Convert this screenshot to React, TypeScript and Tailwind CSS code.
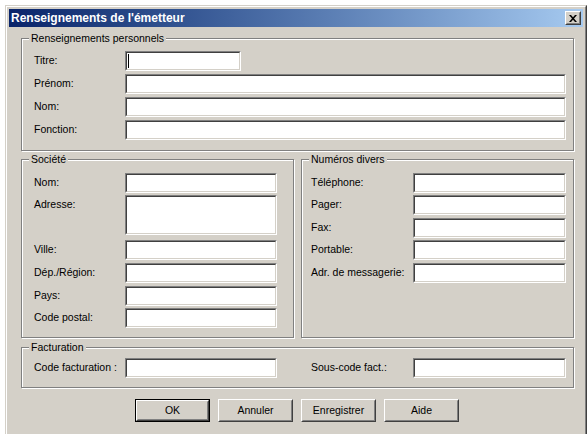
import React from "react";

function Field({ w, h = 20, cursor = false }: { w: string; h?: number; cursor?: boolean }) {
  return (
    <div
      className={`${w} shrink-0 border border-t-[#808080] border-l-[#808080] border-r-white border-b-white`}
      style={{ height: h }}
    >
      <div className="relative h-full border border-t-[#404040] border-l-[#404040] border-r-[#d4d0c8] border-b-[#d4d0c8] bg-white">
        {cursor && <div className="absolute left-[1px] top-[1px] h-[14px] w-[1px] bg-black" />}
      </div>
    </div>
  );
}

function Group({
  title,
  className,
  legendLeft = "left-[7px]",
  children,
}: {
  title: string;
  className: string;
  legendLeft?: string;
  children: React.ReactNode;
}) {
  return (
    <div
      className={`relative border border-[#808080] shadow-[inset_1px_1px_0_#ffffff,1px_1px_0_#ffffff] ${className}`}
    >
      <div className={`absolute ${legendLeft} top-[-7px] bg-[#d4d0c8] px-[2px] leading-[13px]`}>{title}</div>
      {children}
    </div>
  );
}

function Btn({ label, def = false }: { label: string; def?: boolean }) {
  const inner = (
    <div className="h-full border border-t-white border-l-white border-r-[#404040] border-b-[#404040]">
      <div className="flex h-full items-center justify-center border border-t-[#d4d0c8] border-l-[#d4d0c8] border-r-[#808080] border-b-[#808080]">
        {label}
      </div>
    </div>
  );
  return (
    <div className={`h-[23px] w-[75px] ${def ? "border border-black" : ""}`}>{inner}</div>
  );
}

export default function App() {
  return (
    <div className="h-[434px] w-[587px] overflow-hidden bg-white pl-[5px] pt-[5px] font-['Liberation_Sans',Arial,sans-serif] text-[10.5px] text-black">
      <div className="h-[440px] w-[582px] border border-t-[#d4d0c8] border-l-[#d4d0c8] border-r-[#404040] border-b-[#404040]">
        <div className="h-full border border-t-white border-l-white border-r-[#808080] border-b-[#808080] bg-[#d4d0c8] p-[2px]">
          {/* Title bar */}
          <div className="flex h-[18px] items-center justify-between bg-linear-to-r from-[#0a246a] to-[#a6caf0] pl-[2px] pr-[2px]">
            <span className="text-[12px] font-bold leading-none text-white">Renseignements de l'émetteur</span>
            <div className="h-[14px] w-[16px] border border-t-white border-l-white border-r-[#404040] border-b-[#404040] bg-[#d4d0c8]">
              <div className="flex h-full items-center justify-center border border-t-[#d4d0c8] border-l-[#d4d0c8] border-r-[#808080] border-b-[#808080]">
                <svg width="8" height="7" viewBox="0 0 8 7">
                  <path d="M0 0h2l2 2.3L6 0h2L5 3.5 8 7H6L4 4.7 2 7H0l3-3.5z" fill="#000" />
                </svg>
              </div>
            </div>
          </div>

          {/* Content */}
          <div className="pl-[12px] pt-[11px]">
            <Group title="Renseignements personnels" className="h-[113px] w-[553px] pl-[12px] pt-[12px]">
              <div className="flex flex-col gap-[3px]">
                <div className="flex items-center">
                  <div className="w-[91px]">Titre:</div>
                  <Field w="w-[116px]" cursor />
                </div>
                <div className="flex items-center">
                  <div className="w-[91px]">Prénom:</div>
                  <Field w="w-[441px]" />
                </div>
                <div className="flex items-center">
                  <div className="w-[91px]">Nom:</div>
                  <Field w="w-[441px]" />
                </div>
                <div className="flex items-center">
                  <div className="w-[91px]">Fonction:</div>
                  <Field w="w-[441px]" />
                </div>
              </div>
            </Group>

            <div className="mt-[8px] flex gap-[7px]">
              <Group title="Société" className="h-[179px] w-[273px] pl-[12px] pt-[13px]">
                <div className="flex flex-col">
                  <div className="flex items-center">
                    <div className="w-[91px]">Nom:</div>
                    <Field w="w-[152px]" />
                  </div>
                  <div className="mt-[2px] flex items-start">
                    <div className="flex h-[20px] w-[91px] items-center">Adresse:</div>
                    <Field w="w-[152px]" h={40} />
                  </div>
                  <div className="mt-[5px] flex items-center">
                    <div className="w-[91px]">Ville:</div>
                    <Field w="w-[152px]" />
                  </div>
                  <div className="mt-[3px] flex items-center">
                    <div className="w-[91px]">Dép./Région:</div>
                    <Field w="w-[152px]" />
                  </div>
                  <div className="mt-[3px] flex items-center">
                    <div className="w-[91px]">Pays:</div>
                    <Field w="w-[152px]" />
                  </div>
                  <div className="mt-[2px] flex items-center">
                    <div className="w-[91px]">Code postal:</div>
                    <Field w="w-[152px]" />
                  </div>
                </div>
              </Group>

              <Group title="Numéros divers" className="h-[179px] w-[273px] pl-[9px] pt-[13px]">
                <div className="flex flex-col">
                  <div className="flex items-center">
                    <div className="w-[102px]">Téléphone:</div>
                    <Field w="w-[153px]" />
                  </div>
                  <div className="mt-[2px] flex items-center">
                    <div className="w-[102px]">Pager:</div>
                    <Field w="w-[153px]" />
                  </div>
                  <div className="mt-[3px] flex items-center">
                    <div className="w-[102px]">Fax:</div>
                    <Field w="w-[153px]" />
                  </div>
                  <div className="mt-[2px] flex items-center">
                    <div className="w-[102px]">Portable:</div>
                    <Field w="w-[153px]" />
                  </div>
                  <div className="mt-[3px] flex items-center">
                    <div className="w-[102px]">Adr. de messagerie:</div>
                    <Field w="w-[153px]" />
                  </div>
                </div>
              </Group>
            </div>

            <Group title="Facturation" className="mt-[9px] flex h-[41px] w-[553px] items-start pl-[12px] pt-[10px]">
              <div className="flex items-center">
                <div className="w-[91px]">Code facturation :</div>
                <Field w="w-[152px]" />
              </div>
              <div className="ml-[34px] flex items-center">
                <div className="w-[102px]">Sous-code fact.:</div>
                <Field w="w-[153px]" />
              </div>
            </Group>

            <div className="ml-[114px] mt-[11px] flex gap-[8px]">
              <Btn label="OK" def />
              <Btn label="Annuler" />
              <Btn label="Enregistrer" />
              <Btn label="Aide" />
            </div>
          </div>
        </div>
      </div>
    </div>
  );
}
